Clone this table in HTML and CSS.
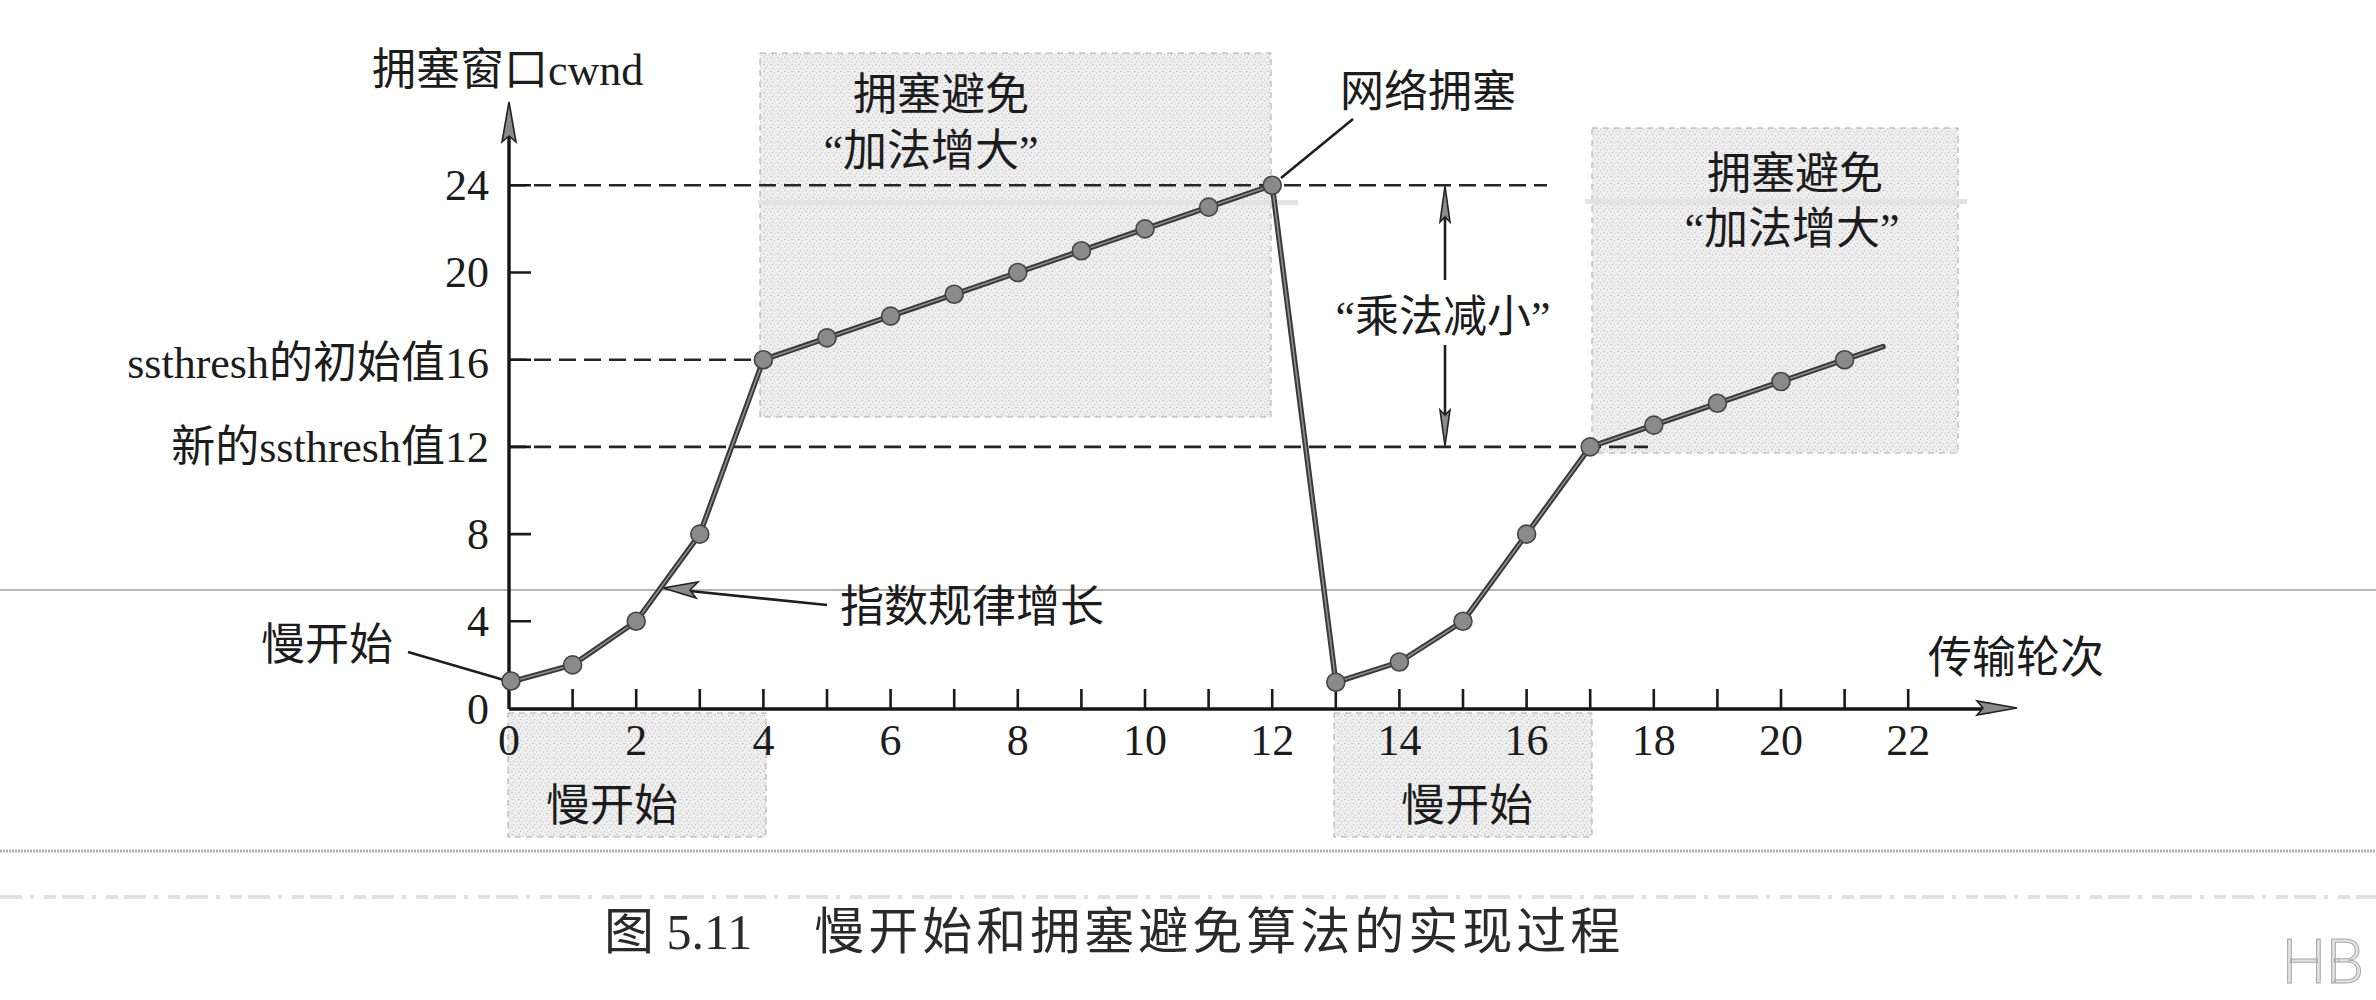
FILE: index.html
```html
<!DOCTYPE html>
<html lang="zh-CN">
<head>
<meta charset="utf-8">
<title>图 5.11 慢开始和拥塞避免算法的实现过程</title>
<link rel="stylesheet" href="styles.css">
</head>
<body>
<figure class="fig">
  <svg class="chart" width="2376" height="900" viewBox="0 0 2376 900" xmlns="http://www.w3.org/2000/svg">
    <defs>
      <pattern id="stip" width="7" height="7" patternUnits="userSpaceOnUse">
        <rect width="7" height="7" fill="#efefef"/>
        <circle cx="1" cy="1.5" r="0.8" fill="#bcbcbc"/>
        <circle cx="4.5" cy="3" r="0.7" fill="#c6c6c6"/>
        <circle cx="2.5" cy="5.5" r="0.7" fill="#c0c0c0"/>
        <circle cx="6" cy="6.2" r="0.6" fill="#cacaca"/>
      </pattern>
    </defs>

    <!-- shaded phase boxes -->
    <rect class="box" x="760" y="53" width="511" height="364"/>
    <rect class="box" x="1592" y="128" width="366" height="325"/>
    <rect class="box" x="508" y="713" width="258" height="124"/>
    <rect class="box" x="1334" y="713" width="258" height="124"/>

    <!-- scan artefacts -->
    <rect class="band" x="758" y="200" width="540" height="5"/>
    <rect class="band" x="1585" y="199" width="382" height="5"/>
    <line class="scan" x1="0" y1="590" x2="2376" y2="590"/>
    <line class="scan2" x1="0" y1="851" x2="2376" y2="851"/>
    <line class="scan3" x1="0" y1="897" x2="2376" y2="897"/>

    <!-- dashed reference lines -->
    <path class="dash" d="M509,185.3H1547 M509,359.7H755 M509,446.9H1648"/>

    <!-- axes -->
    <path class="axis" d="M509,709V136 M509,709H1985"/>
    <polygon class="head" points="509,102 502,142 509,136 516,142"/>
    <polygon class="head" points="2017,708 1977,701 1983,708 1977,715"/>
    <path class="tick" d="M509,185.3H531 M509,272.5H531 M509,359.7H531 M509,446.9H531 M509,534.1H531 M509,621.3H531"/>
    <path class="tick" d="M572.6,689V709 M636.2,689V709 M699.8,689V709 M763.4,689V709 M827,689V709 M890.6,689V709 M954.2,689V709 M1017.8,689V709 M1081.4,689V709 M1145,689V709 M1208.6,689V709 M1272.2,689V709 M1335.8,689V709 M1399.4,689V709 M1463,689V709 M1526.6,689V709 M1590.2,689V709 M1653.8,689V709 M1717.4,689V709 M1781,689V709 M1844.6,689V709 M1908.2,689V709"/>

    <!-- multiplicative decrease arrow -->
    <path class="lead" d="M1445,215V280 M1445,345V414"/>
    <polygon class="head" points="1445,186 1440,222 1445,217 1450,222"/>
    <polygon class="head" points="1445,446 1440,410 1445,415 1450,410"/>

    <!-- leaders -->
    <path class="lead" d="M1353,119L1281,178 M408,652L504,680 M827,605L680,590"/>
    <polygon class="head" points="663,588 698,582 690,590 696,598"/>

    <!-- curve -->
    <polyline class="curve" points="509,682.3 572.6,664.9 636.2,621.3 699.8,534.1 763.4,359.7 827,337.9 890.6,316.1 954.2,294.3 1017.8,272.5 1081.4,250.7 1145,228.9 1208.6,207.1 1272.2,185.3 1335.8,682.3 1399.4,662 1463,621.3 1526.6,534.1 1590.2,446.9 1653.8,425.1 1717.4,403.3 1781,381.5 1844.6,359.7 1883,346.6"/>
    <polyline class="curve-in" points="509,682.3 572.6,664.9 636.2,621.3 699.8,534.1 763.4,359.7 827,337.9 890.6,316.1 954.2,294.3 1017.8,272.5 1081.4,250.7 1145,228.9 1208.6,207.1 1272.2,185.3 1335.8,682.3 1399.4,662 1463,621.3 1526.6,534.1 1590.2,446.9 1653.8,425.1 1717.4,403.3 1781,381.5 1844.6,359.7 1883,346.6"/>
    <g class="dots">
      <circle cx="511" cy="681" r="9"/>
      <circle cx="572.6" cy="664.9" r="9"/>
      <circle cx="636.2" cy="621.3" r="9"/>
      <circle cx="699.8" cy="534.1" r="9"/>
      <circle cx="763.4" cy="359.7" r="9"/>
      <circle cx="827" cy="337.9" r="9"/>
      <circle cx="890.6" cy="316.1" r="9"/>
      <circle cx="954.2" cy="294.3" r="9"/>
      <circle cx="1017.8" cy="272.5" r="9"/>
      <circle cx="1081.4" cy="250.7" r="9"/>
      <circle cx="1145" cy="228.9" r="9"/>
      <circle cx="1208.6" cy="207.1" r="9"/>
      <circle cx="1272.2" cy="185.3" r="9"/>
      <circle cx="1335.8" cy="682.3" r="9"/>
      <circle cx="1399.4" cy="662" r="9"/>
      <circle cx="1463" cy="621.3" r="9"/>
      <circle cx="1526.6" cy="534.1" r="9"/>
      <circle cx="1590.2" cy="446.9" r="9"/>
      <circle cx="1653.8" cy="425.1" r="9"/>
      <circle cx="1717.4" cy="403.3" r="9"/>
      <circle cx="1781" cy="381.5" r="9"/>
      <circle cx="1844.6" cy="359.7" r="9"/>
    </g>

    <!-- axis titles -->
    <text class="t" x="372" y="85">拥塞窗口cwnd</text>
    <text class="t" x="1928" y="673">传输轮次</text>

    <!-- y labels -->
    <g class="t end">
      <text x="489" y="200">24</text>
      <text x="489" y="287">20</text>
      <text x="489" y="378">ssthresh的初始值16</text>
      <text x="489" y="462">新的ssthresh值12</text>
      <text x="489" y="549">8</text>
      <text x="489" y="636">4</text>
      <text x="489" y="724">0</text>
    </g>

    <!-- x labels -->
    <g class="t mid">
      <text x="509" y="755">0</text>
      <text x="636.2" y="755">2</text>
      <text x="763.4" y="755">4</text>
      <text x="890.6" y="755">6</text>
      <text x="1017.8" y="755">8</text>
      <text x="1145" y="755">10</text>
      <text x="1272.2" y="755">12</text>
      <text x="1399.4" y="755">14</text>
      <text x="1526.6" y="755">16</text>
      <text x="1653.8" y="755">18</text>
      <text x="1781" y="755">20</text>
      <text x="1908.2" y="755">22</text>
    </g>

    <!-- annotations -->
    <g class="t mid">
      <text x="941" y="110">拥塞避免</text>
      <text x="931" y="166">“加法增大”</text>
      <text x="1795" y="189">拥塞避免</text>
      <text x="1792" y="244">“加法增大”</text>
      <text x="1443" y="332">“乘法减小”</text>
      <text x="612" y="821">慢开始</text>
      <text x="1467" y="821">慢开始</text>
    </g>
    <text class="t" x="1340" y="107">网络拥塞</text>
    <text class="t" x="261" y="660">慢开始</text>
    <text class="t" x="840" y="622">指数规律增长</text>
  </svg>
  <figcaption class="caption"><span class="fignum">图 5.11</span>慢开始和拥塞避免算法的实现过程</figcaption>
</figure>
<div class="watermark">HB</div>
</body>
</html>
```
FILE: styles.css
```css
html, body {
  margin: 0;
  padding: 0;
  background: #ffffff;
}

body {
  position: relative;
  width: 2376px;
  height: 1000px;
  overflow: hidden;
  font-family: "Liberation Serif", "Noto Sans CJK SC", serif;
  color: #1a1a1a;
}

.fig {
  margin: 0;
  display: flex;
  flex-direction: column;
}

.chart {
  display: block;
}

.box {
  fill: url(#stip);
  stroke: #a8a8a8;
  stroke-width: 1;
  stroke-dasharray: 6 5;
}

.band {
  fill: #e3e3e3;
}

.scan {
  stroke: #b4b4b4;
  stroke-width: 2;
}

.scan2 {
  stroke: #b0b0b0;
  stroke-width: 3;
  stroke-dasharray: 2 1;
}

.scan3 {
  stroke: #e0e0e0;
  stroke-width: 4;
  stroke-dasharray: 22 8 4 10 12 6;
}

.dash {
  fill: none;
  stroke: #262626;
  stroke-width: 2.6;
  stroke-dasharray: 17 8;
}

.axis {
  fill: none;
  stroke: #151515;
  stroke-width: 3.4;
}

.tick {
  fill: none;
  stroke: #1a1a1a;
  stroke-width: 2.6;
}

.head {
  fill: #8a8a8a;
  stroke: #222;
  stroke-width: 1.6;
  stroke-linejoin: miter;
}

.lead {
  fill: none;
  stroke: #1e1e1e;
  stroke-width: 2.6;
}

.curve {
  fill: none;
  stroke: #3a3a3a;
  stroke-width: 5.5;
  stroke-linejoin: round;
  stroke-linecap: round;
}

.curve-in {
  fill: none;
  stroke: #8e8e8e;
  stroke-width: 1.6;
  stroke-linejoin: round;
}

.dots circle {
  fill: #8a8a8a;
  stroke: #444;
  stroke-width: 1.6;
}

.t {
  font-family: "Liberation Serif", "Noto Sans CJK SC", serif;
  font-size: 44px;
  fill: #1c1c1c;
}

.end {
  text-anchor: end;
}

.mid {
  text-anchor: middle;
}

.caption {
  margin: 2px 0 0 0;
  padding-left: 604px;
  height: 60px;
  line-height: 60px;
  font-family: "Liberation Serif", "Noto Sans CJK SC", serif;
  font-size: 50px;
  letter-spacing: 4px;
  color: #2a2a2a;
  white-space: nowrap;
}

.fignum {
  display: inline-block;
  margin-right: 62px;
  letter-spacing: 0;
}

.watermark {
  position: absolute;
  right: 12px;
  top: 931px;
  font-family: Roboto, "Open Sans", sans-serif;
  font-weight: 300;
  font-size: 62px;
  line-height: 62px;
  color: #e2e2e2;
  -webkit-text-stroke: 1px #a9a9a9;
}
```
